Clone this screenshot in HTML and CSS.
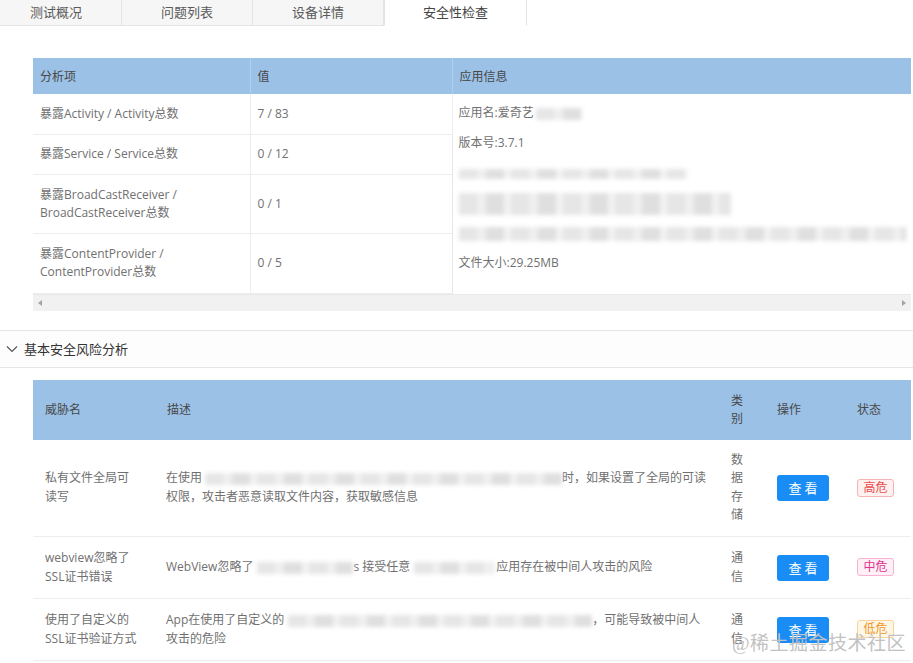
FILE: index.html
```html
<!DOCTYPE html>
<html lang="zh-CN">
<head>
<meta charset="utf-8">
<title>安全性检查</title>
<link rel="stylesheet" href="styles.css">
</head>
<body>
<div class="page">
  <div class="tabs">
    <div class="tab">测试概况</div>
    <div class="tab">问题列表</div>
    <div class="tab">设备详情</div>
    <div class="tab active">安全性检查</div>
    <div class="tab-rest"></div>
  </div>

  <div class="block1">
    <div class="scroll-table">
      <table class="t1">
        <colgroup><col class="c1"><col class="c2"><col class="c3"></colgroup>
        <thead>
          <tr><th>分析项</th><th>值</th><th class="info-h">应用信息</th></tr>
        </thead>
        <tbody>
          <tr class="r40"><td>暴露Activity / Activity总数</td><td>7 / 83</td>
            <td class="info" rowspan="4">
              <div class="line">应用名:爱奇艺<span class="blur b0"></span></div>
              <div class="line">版本号:3.7.1</div>
              <div class="line"><span class="blur b1"></span></div>
              <div class="line"><span class="blur b2"></span></div>
              <div class="line"><span class="blur b3"></span></div>
              <div class="line">文件大小:29.25MB</div>
            </td></tr>
          <tr class="r40"><td>暴露Service / Service总数</td><td>0 / 12</td></tr>
          <tr class="r59"><td>暴露BroadCastReceiver /<br>BroadCastReceiver总数</td><td>0 / 1</td></tr>
          <tr class="r60"><td>暴露ContentProvider /<br>ContentProvider总数</td><td>0 / 5</td></tr>
        </tbody>
      </table>
      <div class="hscroll"><span class="arr left"></span><span class="arr right"></span></div>
    </div>
  </div>

  <div class="section-head">
    <svg class="chev" width="12" height="8" viewBox="0 0 12 8"><polyline points="1,1.5 6,6.5 11,1.5" fill="none" stroke="#555" stroke-width="1.2"/></svg>
    <span>基本安全风险分析</span>
  </div>

  <div class="block2">
    <table class="t2">
      <colgroup><col class="d1"><col class="d2"><col class="d3"><col class="d4"><col class="d5"></colgroup>
      <thead>
        <tr><th>威胁名</th><th>描述</th><th class="narrow">类别</th><th>操作</th><th>状态</th></tr>
      </thead>
      <tbody>
        <tr class="row1">
          <td>私有文件全局可<br>读写</td>
          <td>在使用<span class="blur bl-a"></span>时，如果设置了全局的可读<br>权限，攻击者恶意读取文件内容，获取敏感信息</td>
          <td class="narrow">数据存储</td>
          <td><button class="btn">查 看</button></td>
          <td><span class="badge high">高危</span></td>
        </tr>
        <tr class="row2">
          <td>webview忽略了<br>SSL证书错误</td>
          <td>WebView忽略了<span class="blur bl-b"></span>s 接受任意<span class="blur bl-c"></span>应用存在被中间人攻击的风险</td>
          <td class="narrow">通信</td>
          <td><button class="btn">查 看</button></td>
          <td><span class="badge mid">中危</span></td>
        </tr>
        <tr class="row3">
          <td>使用了自定义的<br>SSL证书验证方式</td>
          <td>App在使用了自定义的<span class="blur bl-d"></span>，可能导致被中间人<br>攻击的危险</td>
          <td class="narrow">通信</td>
          <td><button class="btn">查 看</button></td>
          <td><span class="badge low">低危</span></td>
        </tr>
      </tbody>
    </table>
  </div>

  <div class="watermark">@稀土掘金技术社区</div>
</div>
</body>
</html>
```

FILE: styles.css
```css
* { box-sizing: border-box; }
html, body { margin: 0; padding: 0; background: #fff; }
body {
  font-family: "Open Sans", "Noto Sans CJK SC", sans-serif;
  font-size: 12px;
  color: #707070;
  width: 913px;
  height: 663px;
  overflow: hidden;
}
.page { position: relative; width: 913px; height: 663px; overflow: hidden; }

/* tabs */
.tabs {
  display: flex;
  height: 26px;
  margin-left: -9px;
}
.tab {
  width: 131px;
  height: 26px;
  line-height: 24px;
  text-align: center;
  font-size: 13px;
  color: #5a5a5a;
  background: #f6f6f6;
  border: 1px solid #e4e4e4;
  border-top: none;
  border-left: none;
}
.tab.active {
  width: 143px;
  background: #fff;
  border-bottom-color: #fff;
  border-left: 1px solid #e4e4e4;
  color: #444;
}
.tab-rest { flex: 1; }

/* table 1 */
.block1 { padding: 32px 2px 0 33px; }
.scroll-table { width: 878px; }
table { border-collapse: collapse; table-layout: fixed; }
.t1 { width: 878px; }
.t1 .c1 { width: 217px; }
.t1 .c2 { width: 202px; }
.t1 .c3 { width: 459px; }
.t1 th {
  height: 36px;
  background: #9bc1e6;
  color: #484848;
  font-weight: normal;
  text-align: left;
  padding: 0 7px;
  border-right: 1px solid #b3cfea;
}
.t1 th:last-child { border-right: none; }
.t1 td {
  padding: 0 7px;
  border-bottom: 1px solid #ededed;
  border-right: 1px solid #ededed;
  line-height: 18px;
  vertical-align: middle;
}
.t1 td.info { border-right: none; border-left: 1px solid #e6e6e6; vertical-align: top; padding: 4px 6px 0 6px; border-bottom: none; }
.t1 .r40 td { height: 40px; }
.t1 .r59 td { height: 59px; }
.t1 .r60 td { height: 60px; }
.line { height: 30px; line-height: 30px; white-space: nowrap; }

.hscroll {
  position: relative;
  height: 17px;
  background: #f1f1f1;
  border-top: 1px solid #e8e8e8;
}
.arr { position: absolute; top: 5px; width: 0; height: 0; border-top: 3px solid transparent; border-bottom: 3px solid transparent; }
.arr.left { left: 5px; border-right: 4px solid #a3a3a3; }
.arr.right { right: 5px; border-left: 4px solid #a3a3a3; }

/* blurred redactions */
.blur {
  display: inline-block;
  vertical-align: middle;
  height: 12px;
  background:
    repeating-linear-gradient(90deg, #e6e6e6 0 18px, #efefef 18px 27px, #dfdfdf 27px 45px, #f2f2f2 45px 52px);
  filter: blur(2px);
}
.b0 { width: 46px; margin-left: 2px; }
.b1 { width: 228px; height: 10px; }
.b2 { width: 272px; height: 22px; }
.b3 { width: 447px; height: 14px; }
.bl-a { width: 357px; margin-left: 3px; }
.bl-b { width: 96px; margin-left: 4px; }
.bl-c { width: 80px; margin: 0 2px 0 4px; }
.bl-d { width: 304px; margin-left: 4px; }

/* section header */
.section-head {
  display: flex;
  align-items: center;
  gap: 6px;
  margin-top: 19px;
  height: 38px;
  padding-left: 6px;
  background: #fdfdfd;
  border-top: 1px solid #e6e6e6;
  border-bottom: 1px solid #e6e6e6;
  color: #333;
  font-size: 13px;
}
.chev { display: block; }

/* table 2 */
.block2 { padding: 12px 2px 0 33px; }
.t2 { width: 878px; }
.t2 .d1 { width: 122px; }
.t2 .d2 { width: 565px; }
.t2 .d3 { width: 45px; }
.t2 .d4 { width: 80px; }
.t2 .d5 { width: 66px; }
.t2 th {
  height: 60px;
  background: #9bc1e6;
  color: #484848;
  font-weight: normal;
  text-align: left;
  padding: 0 11px 0 12px;
  line-height: 18px;
}
.t2 td {
  padding: 0 11px 0 12px;
  line-height: 18.5px;
  vertical-align: middle;
  border-bottom: 1px solid #ededed;
}
.t2 th.narrow, .t2 td.narrow { padding: 0 18px 0 11px; word-break: break-all; }
.t2 td:nth-child(2) { padding-left: 11px; }
.t2 .row1 td { height: 97px; }
.t2 .row2 td { height: 62px; }
.t2 .row3 td { height: 62px; }

.btn {
  display: block;
  width: 52px;
  height: 26px;
  border: none;
  border-radius: 3px;
  background: #1a8cf5;
  color: #fff;
  font-family: "Noto Sans CJK SC", sans-serif;
  font-size: 13px;
  padding: 0;
}
.badge {
  display: inline-block;
  width: 37px;
  height: 18px;
  line-height: 16px;
  text-align: center;
  border: 1px solid;
  border-radius: 3px;
  font-size: 12px;
}
.badge.high { color: #e84b4b; border-color: #f5b4b4; background: #fff1f0; }
.badge.mid { color: #e0338f; border-color: #f7b2d6; background: #fff0f6; }
.badge.low { color: #f0962a; border-color: #fbd39a; background: #fff7e6; }

.watermark {
  position: absolute;
  right: 7px;
  bottom: 8px;
  font-family: "Liberation Serif", "Noto Sans CJK SC", serif;
  font-size: 19px;
  color: #c2c2c2;
  letter-spacing: 0.5px;
}
```
